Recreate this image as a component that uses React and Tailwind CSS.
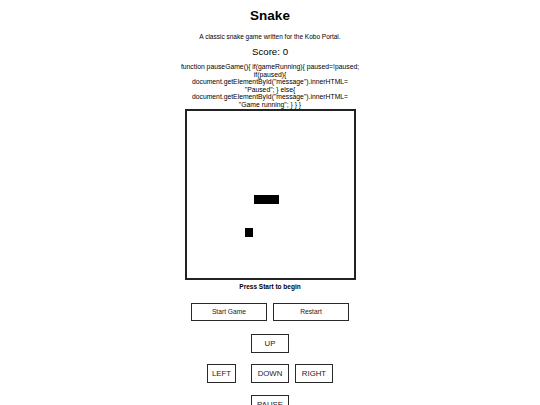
export default function App() {
  const font = { fontFamily: '"Liberation Sans", Arial, sans-serif' };
  const codeLines = [
    'function pauseGame(){ if(gameRunning){ paused=!paused;',
    'if(paused){',
    'document.getElementById("message").innerHTML=',
    '"Paused"; } else{',
    'document.getElementById("message").innerHTML=',
    '"Game running"; } } }',
  ];
  const btn =
    'h-full shrink-0 flex items-center justify-center border border-[#2a2a2a] bg-white text-[#1a1a1a] leading-none';
  return (
    <div
      className="w-[540px] h-[405px] overflow-hidden bg-white flex flex-col items-center text-black font-['Liberation_Sans',Arial,sans-serif]"
      style={font}
    >
      <div className="shrink-0 h-[32px] flex items-center justify-center text-[13.5px] font-bold leading-none">
        Snake
      </div>
      <div className="shrink-0 h-[10px] flex items-center justify-center text-[6.5px] leading-none">
        A classic snake game written for the Kobo Portal.
      </div>
      <div className="shrink-0 mt-[4px] h-[12px] flex items-center justify-center text-[9.7px] leading-none">
        Score: 0
      </div>
      <div className="shrink-0 mt-[5px] flex flex-col items-center text-[6.8px] leading-[7.5px] text-center">
        {codeLines.map((l, i) => (
          <div key={i} className="whitespace-nowrap h-[7.5px]">
            {l}
          </div>
        ))}
      </div>
      <div className="shrink-0 mt-[1px] relative w-[171px] h-[171px] border-2 border-[#222] bg-white">
        <div className="absolute left-[67px] top-[84px] w-[25.5px] h-[8.5px] bg-black" />
        <div className="absolute left-[58px] top-[117px] w-[8.5px] h-[8.5px] bg-black" />
      </div>
      <div className="shrink-0 h-[14px] flex items-center justify-center text-[6.5px] font-bold leading-none">
        Press Start to begin
      </div>
      <div className="shrink-0 mt-[9px] h-[18px] flex gap-[6px]">
        <div className={`${btn} text-[6.7px] w-[76px]`}>Start Game</div>
        <div className={`${btn} text-[6.7px] w-[76px]`}>Restart</div>
      </div>
      <div className="shrink-0 mt-[13px] h-[19px] flex">
        <div className={`${btn} text-[7.8px] w-[38px]`}>UP</div>
      </div>
      <div className="shrink-0 mt-[11px] h-[19px] flex">
        <div className={`${btn} text-[7.8px] w-[29px] mr-[15px]`}>LEFT</div>
        <div className={`${btn} text-[7.8px] w-[38px] mr-[6px]`}>DOWN</div>
        <div className={`${btn} text-[7.8px] w-[38px]`}>RIGHT</div>
      </div>
      <div className="shrink-0 mt-[12px] h-[19px] flex">
        <div className={`${btn} text-[7.8px] w-[38px]`}>PAUSE</div>
      </div>
    </div>
  );
}
